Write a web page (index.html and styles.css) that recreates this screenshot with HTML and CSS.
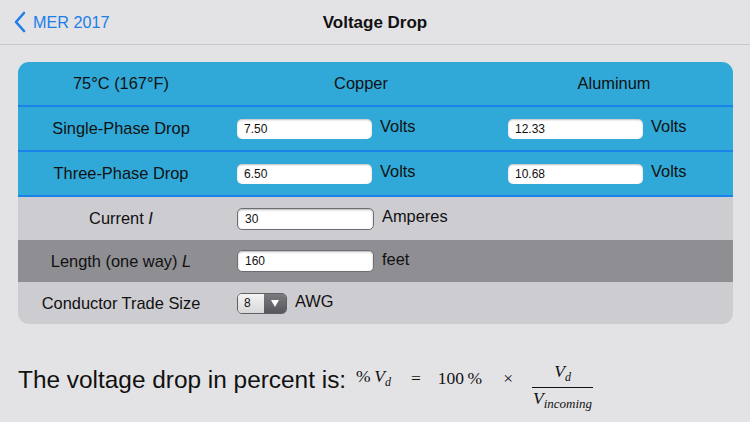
FILE: index.html
```html
<!DOCTYPE html>
<html>
<head>
<meta charset="utf-8">
<link rel="stylesheet" href="styles.css">
</head>
<body>
<div class="nav">
  <div class="back">
    <svg class="chev" width="13" height="22" viewBox="0 0 13 22"><path d="M11 2 L3 11 L11 20" fill="none" stroke="#1c7ee6" stroke-width="2.6" stroke-linecap="round" stroke-linejoin="round"/></svg>
    <span>MER 2017</span>
  </div>
  <div class="title">Voltage Drop</div>
</div>
<div class="card">
  <div class="row blue head">
    <div class="lab">75°C (167°F)</div>
    <div class="colh">Copper</div>
    <div class="colh">Aluminum</div>
  </div>
  <div class="row blue">
    <div class="lab">Single-Phase Drop</div>
    <div class="cell"><div class="inp">7.50</div><span class="unit">Volts</span></div>
    <div class="cell"><div class="inp">12.33</div><span class="unit">Volts</span></div>
  </div>
  <div class="row blue">
    <div class="lab">Three-Phase Drop</div>
    <div class="cell"><div class="inp">6.50</div><span class="unit">Volts</span></div>
    <div class="cell"><div class="inp">10.68</div><span class="unit">Volts</span></div>
  </div>
  <div class="row light first">
    <div class="lab">Current <i>I</i></div>
    <div class="cell"><div class="inp gray">30</div><span class="unit">Amperes</span></div>
    <div></div>
  </div>
  <div class="row dark">
    <div class="lab">Length (one way) <i>L</i></div>
    <div class="cell"><div class="inp gray">160</div><span class="unit">feet</span></div>
    <div></div>
  </div>
  <div class="row light last">
    <div class="lab">Conductor Trade Size</div>
    <div class="cell"><div class="sel"><span class="sv">8</span><span class="sb"><svg width="8" height="7" viewBox="0 0 8 7"><path d="M0 0 H8 L4 7 Z" fill="#fff"/></svg></span></div><span class="unit">AWG</span></div>
    <div></div>
  </div>
</div>
<div class="result">
  <span class="rtext">The voltage drop in percent is:</span>
  <span class="math">
    <span class="m1">%&thinsp;<i>V</i><sub><i>d</i></sub></span>
    <span class="eq">=</span>
    <span class="m2">100&thinsp;%</span>
    <span class="times">×</span>
    <span class="frac"><span class="num"><i>V</i><sub><i>d</i></sub></span><span class="den"><i>V</i><sub><i>incoming</i></sub></span></span>
  </span>
</div>
</body>
</html>
```
FILE: styles.css
```css
html, body {
  margin: 0;
  padding: 0;
  background: #e3e3e6;
  font-family: "Helvetica Neue", "Liberation Sans", Arial, sans-serif;
  color: #111;
  width: 750px;
  height: 422px;
  overflow: hidden;
}
.nav {
  height: 44px;
  border-bottom: 1px solid #c8c8cc;
  display: flex;
  align-items: center;
  justify-content: center;
  position: relative;
}
.back {
  position: absolute;
  left: 13px;
  top: 11px;
  display: flex;
  align-items: center;
  gap: 7px;
  color: #1c7ee6;
  font-size: 16.2px;
}
.title {
  font-weight: bold;
  font-size: 17px;
  margin-top: 1px;
}
.card {
  margin: 17px 17px 0 18px;
  border-radius: 11px;
  overflow: hidden;
}
.row {
  display: grid;
  grid-template-columns: 206px 271px 1fr;
  align-items: center;
  height: 43px;
  font-size: 16.4px;
}
.blue {
  background: #30a9d8;
  border-bottom: 2px solid #1a83ea;
}
.light { background: #cdccd1; }
.dark { background: #8f8e93; height: 42px; }
.last { height: 42px; }
.lab { text-align: center; }
.lab i { font-style: italic; }
.colh { text-align: center; padding-left: 3px; }
.colh + .colh { padding-left: 0; }
.cell {
  display: flex;
  align-items: center;
  padding-left: 13px;
  gap: 8px;
}
.cell .unit { margin-top: -4px; }
.inp {
  width: 128px;
  height: 20px;
  background: #fff;
  border-radius: 5px;
  font-size: 12px;
  line-height: 20px;
  padding-left: 7px;
  box-shadow: inset 0 1px 2px rgba(0,0,0,0.25);
}
.inp.gray {
  border: 1px solid #6d6d72;
  box-shadow: inset 0 1px 2px rgba(0,0,0,0.3);
}
.sel {
  display: flex;
  width: 48px;
  height: 19px;
  border: 1px solid #5f5f64;
  border-radius: 5px;
  overflow: hidden;
  font-size: 12px;
}
.sv {
  flex: 1;
  background: linear-gradient(#f4f4f4, #d8d8d8);
  padding-left: 6px;
  line-height: 19px;
}
.sb {
  width: 22px;
  background: linear-gradient(#7a7a7f, #56565b);
  display: flex;
  align-items: center;
  justify-content: center;
}
.result {
  margin: 31px 0 0 18px;
  display: flex;
  align-items: center;
}
.rtext {
  font-size: 24.4px;
}
.math {
  font-family: "Liberation Serif", "Times New Roman", serif;
  font-size: 17.5px;
  display: flex;
  align-items: center;
  margin-left: 10px;
  margin-top: -3px;
}
.math sub { font-size: 12px; vertical-align: -4px; }
.eq { margin-left: 20px; }
.m2 { margin-left: 17px; }
.times { margin-left: 21px; }
.frac {
  margin-left: 19px;
  display: inline-flex;
  flex-direction: column;
  align-items: center;
  transform: translateY(10px);
}
.num {
  border-bottom: 1px solid #111;
  padding: 0 0 1px 0;
  width: 100%;
  text-align: center;
  line-height: 18px;
}
.den { line-height: 20px; padding: 0 1px; }
.den sub { font-size: 13px; }
```
